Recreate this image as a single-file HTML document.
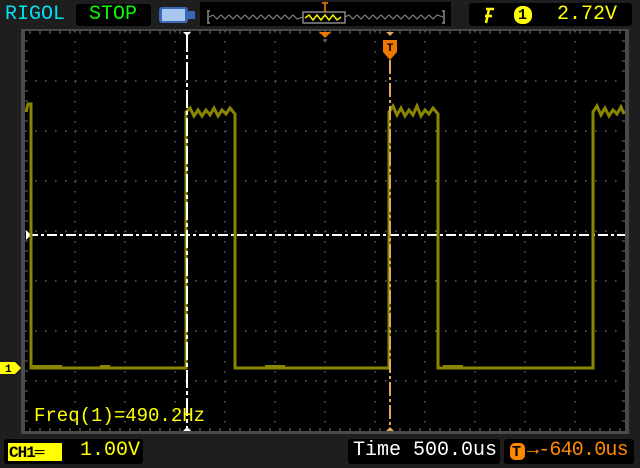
<!DOCTYPE html>
<html><head><meta charset="utf-8"><style>
body{margin:0;width:640px;height:468px;background:#1e1e1e;overflow:hidden;font-family:"Liberation Mono",monospace;position:relative}
.t{position:absolute;white-space:nowrap;font-size:20px;line-height:20px}
</style></head><body>
<svg width="640" height="468" style="position:absolute;left:0;top:0">
<rect x="76" y="4" width="75" height="22" rx="3" fill="#000"/>
<rect x="200" y="2" width="251" height="24" fill="#000"/>
<rect x="469" y="3" width="163" height="23" rx="3" fill="#000"/>
<rect x="159" y="7" width="29" height="16" rx="3" fill="#3a66b8"/>
<rect x="162" y="9" width="23" height="12" fill="#a8c8f0"/>
<rect x="188" y="11" width="7" height="8" fill="#3a66b8"/>
<path d="M208 11v12M207 11h3M207 23h3M444 11v12M442 11h3M442 23h3" stroke="#888" stroke-width="1.5" fill="none"/>
<polyline points="209,17 213,15 217,19 221,15 225,19 229,15 233,19 237,15 241,19 245,15 249,19 253,15 257,19 261,15 265,19 269,15 273,19 277,15 281,19 285,15 289,19 293,15 297,19 303,17" stroke="#888" fill="none"/>
<polyline points="345,17 349,15 353,19 357,15 361,19 365,15 369,19 373,15 377,19 381,15 385,19 389,15 393,19 397,15 401,19 405,15 409,19 413,15 417,19 421,15 425,19 429,15 433,19 437,15 443,17" stroke="#888" fill="none"/>
<rect x="303" y="12" width="42" height="11" fill="none" stroke="#888" stroke-width="1.5"/>
<polyline points="305,18 309,15 313,20 317,15 321,20 325,15 329,20 333,15 337,20 341,17" stroke="#ee0" stroke-width="1.5" fill="none"/>
<path d="M322 3h6M325 3v9" stroke="#f80" stroke-width="1.5"/>
<rect x="21" y="29" width="608" height="405" fill="#4a4a4a"/>
<rect x="25" y="31" width="600" height="400" fill="#000"/>
<g stroke="#606060" stroke-width="1.5" stroke-dasharray="1.5 8.5">
<path d="M75 31V431M125 31V431M175 31V431M225 31V431M275 31V431M375 31V431M425 31V431M475 31V431M525 31V431M575 31V431"/>
<path d="M25 81H625M25 131H625M25 181H625M25 281H625M25 331H625M25 381H625"/>
<path d="M325 31V431M25 231H625"/>
</g>
<g stroke="#5a5a5a" stroke-width="1.3">
<path d="M30 31v3M40 31v3M50 31v3M60 31v3M70 31v3M80 31v3M90 31v3M100 31v3M110 31v3M120 31v3M130 31v3M140 31v3M150 31v3M160 31v3M170 31v3M180 31v3M190 31v3M200 31v3M210 31v3M220 31v3M230 31v3M240 31v3M250 31v3M260 31v3M270 31v3M280 31v3M290 31v3M300 31v3M310 31v3M320 31v3M330 31v3M340 31v3M350 31v3M360 31v3M370 31v3M380 31v3M390 31v3M400 31v3M410 31v3M420 31v3M430 31v3M440 31v3M450 31v3M460 31v3M470 31v3M480 31v3M490 31v3M500 31v3M510 31v3M520 31v3M530 31v3M540 31v3M550 31v3M560 31v3M570 31v3M580 31v3M590 31v3M600 31v3M610 31v3M620 31v3"/>
<path d="M30 431v-3M40 431v-3M50 431v-3M60 431v-3M70 431v-3M80 431v-3M90 431v-3M100 431v-3M110 431v-3M120 431v-3M130 431v-3M140 431v-3M150 431v-3M160 431v-3M170 431v-3M180 431v-3M190 431v-3M200 431v-3M210 431v-3M220 431v-3M230 431v-3M240 431v-3M250 431v-3M260 431v-3M270 431v-3M280 431v-3M290 431v-3M300 431v-3M310 431v-3M320 431v-3M330 431v-3M340 431v-3M350 431v-3M360 431v-3M370 431v-3M380 431v-3M390 431v-3M400 431v-3M410 431v-3M420 431v-3M430 431v-3M440 431v-3M450 431v-3M460 431v-3M470 431v-3M480 431v-3M490 431v-3M500 431v-3M510 431v-3M520 431v-3M530 431v-3M540 431v-3M550 431v-3M560 431v-3M570 431v-3M580 431v-3M590 431v-3M600 431v-3M610 431v-3M620 431v-3"/>
<path d="M25 41h3M25 51h3M25 61h3M25 71h3M25 91h3M25 101h3M25 111h3M25 121h3M25 141h3M25 151h3M25 161h3M25 171h3M25 191h3M25 201h3M25 211h3M25 221h3M25 241h3M25 251h3M25 261h3M25 271h3M25 291h3M25 301h3M25 311h3M25 321h3M25 341h3M25 351h3M25 361h3M25 371h3M25 391h3M25 401h3M25 411h3M25 421h3"/>
<path d="M625 41h-3M625 51h-3M625 61h-3M625 71h-3M625 91h-3M625 101h-3M625 111h-3M625 121h-3M625 141h-3M625 151h-3M625 161h-3M625 171h-3M625 191h-3M625 201h-3M625 211h-3M625 221h-3M625 241h-3M625 251h-3M625 261h-3M625 271h-3M625 291h-3M625 301h-3M625 311h-3M625 321h-3M625 341h-3M625 351h-3M625 361h-3M625 371h-3M625 391h-3M625 401h-3M625 411h-3M625 421h-3"/>
</g>
<path d="M28 235H625" stroke="#fff" stroke-width="2" stroke-dasharray="10 3 3 3"/>
<path d="M26 230l5 5-5 5z" fill="#fff"/>
<g stroke="#8a8600" stroke-width="3" fill="none">
<polyline points="26,112 28,104 31,104 31,368 186,368 186,112 190,108 194,116 198,110 202,116 206,110 210,115 214,108 218,116 222,110 226,114 230,108 235,114 235,368 389,368 389,112 393,106 397,115 401,108 405,116 409,110 413,115 417,106 421,116 425,110 429,114 433,108 438,114 438,368 593,368 593,112 597,106 601,115 605,108 609,116 613,110 617,114 621,107 624,114"/>
</g>
<path d="M32 366h30M100 366h10M265 366h20M443 366h20" stroke="#8a8600" stroke-width="2"/>
<path d="M187 34V428" stroke="#fff" stroke-width="2" stroke-dasharray="18 3 4 3"/>
<path d="M183 32h8l-4 4z M183 431h8l-4-4z" fill="#fff"/>
<path d="M390 60V428" stroke="#e0a860" stroke-width="2" stroke-dasharray="14 3 3 3"/>
<path d="M386 431h8l-4-4z M386 32h8l-4 4z" fill="#e0a860"/>
<path d="M383 40h14v12l-7 8-7-8z" fill="#f07800"/>
<text x="390" y="51" font-family="Liberation Mono" font-weight="bold" font-size="11" fill="#000" text-anchor="middle">T</text>
<path d="M319 32h12l-6 6z" fill="#f07800"/>
<path d="M323 40h4" stroke="#555" stroke-width="2"/>
<path d="M0 362h15l6 6-6 6H0z" fill="#ff0"/>
<text x="5" y="372" font-family="Liberation Mono" font-weight="bold" font-size="11" fill="#000">1</text>
<rect x="4" y="439" width="139" height="25" rx="3" fill="#000"/>
<rect x="8" y="443" width="54" height="18" fill="#ff0"/>
<rect x="348" y="439" width="152" height="25" rx="3" fill="#000"/>
<rect x="504" y="439" width="130" height="25" rx="3" fill="#000"/>
<rect x="514" y="6" width="18" height="18" rx="8" fill="#ff0"/>
<path d="M486 9h8M489 9l-3 14M485 16h7" stroke="#ff0" stroke-width="2.5" fill="none"/>
<rect x="510" y="443" width="15" height="17" rx="5" fill="#f80"/>
</svg>
<div class="t" style="left:5px;top:5px;color:#00e0f0">RIGOL</div>
<div class="t" style="left:89px;top:5px;color:#00ff00">STOP</div>
<div class="t" style="left:518px;top:6px;color:#000;font-size:15px;font-weight:bold">1</div>
<div class="t" style="left:557px;top:5px;color:#ff0">2.72V</div>
<div class="t" style="left:34px;top:406px;color:#ff0;font-size:19px">Freq(1)=490.2Hz</div>
<div class="t" style="left:9px;top:443px;color:#000;font-size:16px;font-weight:bold;letter-spacing:-1px">CH1═</div>
<div class="t" style="left:80px;top:441px;color:#ff0">1.00V</div>
<div class="t" style="left:353px;top:441px;color:#fff">Time 500.0us</div>
<div class="t" style="left:512px;top:443px;color:#000;font-size:15px;font-weight:bold">T</div>
<div class="t" style="left:527px;top:441px;color:#f80;letter-spacing:-0.8px">→-640.0us</div>
</body></html>
